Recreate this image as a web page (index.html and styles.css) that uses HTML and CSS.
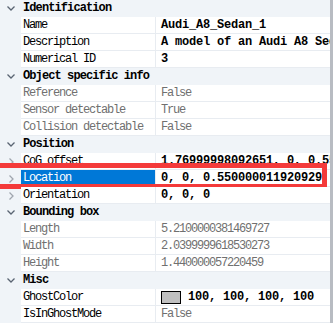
FILE: index.html
```
<!DOCTYPE html>
<html>
<head>
<meta charset="utf-8">
<link rel="stylesheet" href="styles.css">
</head>
<body>
<div class="grid">
  <div class="cat"><span class="gut"><svg class="chev" viewBox="0 0 8 5"><path d="M0.5 0.5 L4 4 L7.5 0.5" /></svg></span><span class="catname">Identification</span></div>
  <div class="row"><span class="gut"></span><span class="name">Name</span><span class="val b">Audi_A8_Sedan_1</span></div>
  <div class="row"><span class="gut"></span><span class="name">Description</span><span class="val b">A model of an Audi A8 Sedan</span></div>
  <div class="row"><span class="gut"></span><span class="name">Numerical ID</span><span class="val b">3</span></div>

  <div class="cat"><span class="gut"><svg class="chev" viewBox="0 0 8 5"><path d="M0.5 0.5 L4 4 L7.5 0.5" /></svg></span><span class="catname">Object specific info</span></div>
  <div class="row ro"><span class="gut"></span><span class="name">Reference</span><span class="val">False</span></div>
  <div class="row ro"><span class="gut"></span><span class="name">Sensor detectable</span><span class="val">True</span></div>
  <div class="row ro"><span class="gut"></span><span class="name">Collision detectable</span><span class="val">False</span></div>

  <div class="cat"><span class="gut"><svg class="chev" viewBox="0 0 8 5"><path d="M0.5 0.5 L4 4 L7.5 0.5" /></svg></span><span class="catname">Position</span></div>
  <div class="row"><span class="gut"><svg class="arr" viewBox="0 0 5 8"><path d="M0.5 0.5 L4 4 L0.5 7.5" /></svg></span><span class="name">CoG offset</span><span class="val b">1.76999998092651, 0, 0.55</span></div>
  <div class="row sel"><span class="gut"><svg class="arr" viewBox="0 0 5 8"><path d="M0.5 0.5 L4 4 L0.5 7.5" /></svg></span><span class="name">Location</span><span class="val b">0, 0, 0.550000011920929</span><span class="mark"></span></div>
  <div class="row"><span class="gut"><svg class="arr" viewBox="0 0 5 8"><path d="M0.5 0.5 L4 4 L0.5 7.5" /></svg></span><span class="name">Orientation</span><span class="val b">0, 0, 0</span></div>

  <div class="cat"><span class="gut"><svg class="chev" viewBox="0 0 8 5"><path d="M0.5 0.5 L4 4 L7.5 0.5" /></svg></span><span class="catname">Bounding box</span></div>
  <div class="row ro"><span class="gut"></span><span class="name">Length</span><span class="val">5.2100000381469727</span></div>
  <div class="row ro"><span class="gut"></span><span class="name">Width</span><span class="val">2.0399999618530273</span></div>
  <div class="row ro"><span class="gut"></span><span class="name">Height</span><span class="val">1.440000057220459</span></div>

  <div class="cat"><span class="gut"><svg class="chev" viewBox="0 0 8 5"><path d="M0.5 0.5 L4 4 L7.5 0.5" /></svg></span><span class="catname">Misc</span></div>
  <div class="row"><span class="gut"></span><span class="name">GhostColor</span><span class="val b"><span class="swatch"></span>100, 100, 100, 100</span></div>
  <div class="row"><span class="gut"></span><span class="name">IsInGhostMode</span><span class="val ro-val">False</span></div>
</div>
</body>
</html>
```
FILE: styles.css
```
html, body {
  margin: 0;
  padding: 0;
  background: #ffffff;
}
.grid {
  width: 330px;
  height: 323px;
  overflow: hidden;
  border-right: 3px solid #b8bcc2;
  font-family: "Liberation Mono", "DejaVu Sans Mono", monospace;
  font-size: 12px;
  letter-spacing: -1.2px;
  color: #000;
  background: #f0f4f8;
}
.cat, .row {
  display: flex;
  height: 17px;
  align-items: stretch;
  position: relative;
}
.gut {
  width: 21px;
  flex: none;
  display: flex;
  align-items: center;
  justify-content: center;
}
.chev {
  width: 8px;
  height: 5px;
  fill: none;
  stroke: #5a6472;
  stroke-width: 1.3;
}
.arr {
  width: 5px;
  height: 8px;
  fill: none;
  stroke: #a0a6ae;
  stroke-width: 1.3;
  margin-left: 1px;
}
.catname {
  font-weight: bold;
  line-height: 17px;
  padding-left: 2px;
  letter-spacing: -0.9px;
  white-space: nowrap;
}
.name {
  width: 132px;
  flex: none;
  padding-left: 2px;
  background: #fff;
  line-height: 16px;
  border-bottom: 1px solid #e8ecf1;
  border-right: 1px solid #e8ecf1;
  white-space: nowrap;
  overflow: hidden;
}
.val {
  flex: 1;
  padding-left: 5px;
  background: #fff;
  line-height: 16px;
  border-bottom: 1px solid #e8ecf1;
  white-space: nowrap;
  overflow: hidden;
  display: flex;
  align-items: center;
}
.b {
  font-weight: bold;
  letter-spacing: -0.2px;
}
.ro .name, .ro .val, .ro-val {
  color: #707070;
}
.sel .name {
  background: #0078d7;
  color: #fff;
}
.swatch {
  width: 18px;
  height: 11px;
  background: #c0c0c0;
  border: 1px solid #000;
  flex: none;
  margin-right: 7px;
}
.mark {
  position: absolute;
  left: -10px;
  top: -7px;
  width: 332px;
  height: 16px;
  border: 5px solid #f43a3a;
  border-left-width: 0;
  pointer-events: none;
}
```
